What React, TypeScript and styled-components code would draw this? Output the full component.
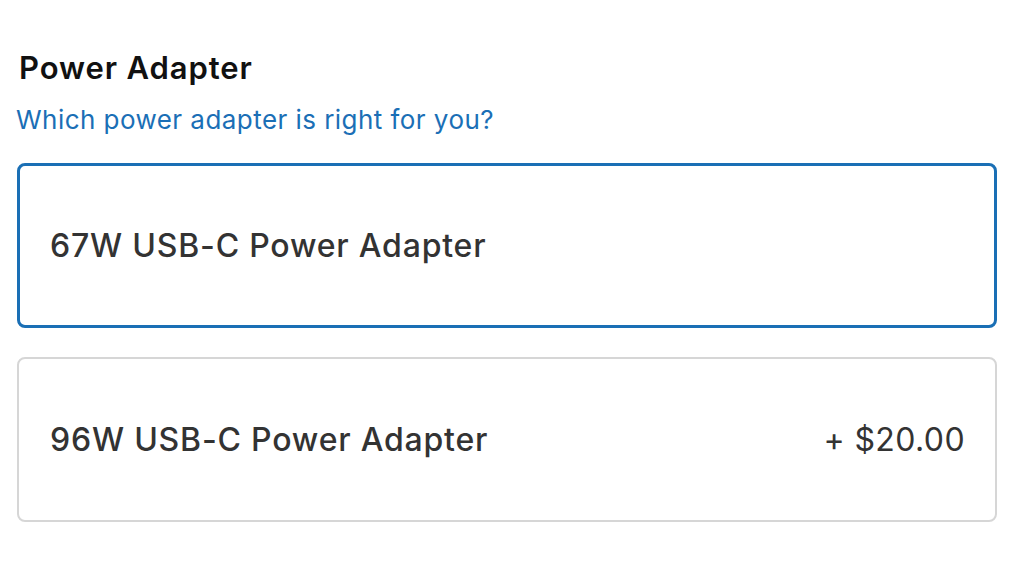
import React from "react";
import styled, { createGlobalStyle } from "styled-components";

const GlobalStyle = createGlobalStyle`
    body {
        margin: 0;
        background: #fff;
        font-family: Inter, "Liberation Sans", sans-serif;
    }
`;

const Section = styled.section`
    width: 980px;
    padding: 49px 0 0 17px;
`;

const Title = styled.h2`
    margin: 0 0 0 2px;
    font-size: 31px;
    line-height: 37px;
    font-weight: 600;
    letter-spacing: 0.9px;
    color: #111;
`;

const HelpLink = styled.a`
    display: block;
    margin: 19px 0 0 -1px;
    font-size: 26px;
    line-height: 29px;
    letter-spacing: 0.45px;
    color: #1b6fb6;
    text-decoration: none;
`;

const Options = styled.div`
    display: flex;
    flex-direction: column;
    gap: 29px;
    margin-top: 29px;
`;

const Option = styled.div<{ $selected?: boolean }>`
    box-sizing: border-box;
    height: 165px;
    display: flex;
    align-items: center;
    justify-content: space-between;
    padding: ${(p) => (p.$selected ? "0 29px 0 30px" : "0 30px 0 31px")};
    border-radius: 8px;
    border: ${(p) => (p.$selected ? "3px solid #1a6fb5" : "2px solid #d6d6d6")};
    color: #333;
    font-size: 32px;
    letter-spacing: 0.8px;
`;

const OptionName = styled.span`
    font-weight: 500;
`;

const Price = styled.span`
    font-weight: 400;
    letter-spacing: 0.4px;
`;

const adapters = [
    { name: "67W USB-C Power Adapter", price: "", selected: true },
    { name: "96W USB-C Power Adapter", price: "+ $20.00", selected: false },
];

export default function App() {
    return (
        <>
            <GlobalStyle />
            <Section>
                <Title>Power Adapter</Title>
                <HelpLink href="#">Which power adapter is right for you?</HelpLink>
                <Options>
                    {adapters.map((a) => (
                        <Option key={a.name} $selected={a.selected}>
                            <OptionName>{a.name}</OptionName>
                            {a.price && <Price>{a.price}</Price>}
                        </Option>
                    ))}
                </Options>
            </Section>
        </>
    );
}
